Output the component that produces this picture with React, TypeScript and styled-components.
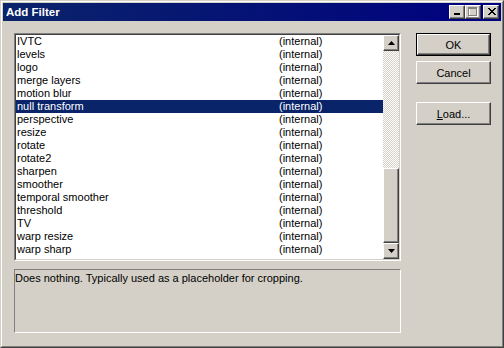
import React, { useState } from 'react'
import styled, { createGlobalStyle, css } from 'styled-components'

const FILTERS = [
  'IVTC',
  'levels',
  'logo',
  'merge layers',
  'motion blur',
  'null transform',
  'perspective',
  'resize',
  'rotate',
  'rotate2',
  'sharpen',
  'smoother',
  'temporal smoother',
  'threshold',
  'TV',
  'warp resize',
  'warp sharp',
]

const GlobalStyle = createGlobalStyle`
  html, body {
    margin: 0;
    padding: 0;
    background: #d4d0c8;
  }
  body {
    font-family: "Liberation Sans", Arial, sans-serif;
    font-size: 11px;
  }
`

const raised = css`
  background: #d4d0c8;
  border-style: solid;
  border-width: 1px;
  border-color: #fff #404040 #404040 #fff;
  box-shadow: inset -1px -1px 0 #808080, inset 1px 1px 0 #d4d0c8;
  box-sizing: border-box;
`

const Frame = styled.div`
  width: 504px;
  height: 348px;
  box-sizing: border-box;
  border: 1px solid;
  border-color: #d4d0c8 #404040 #404040 #d4d0c8;
  background: #d4d0c8;
  display: flex;
`

const Inner = styled.div`
  flex: 1;
  border: 1px solid;
  border-color: #fff #808080 #808080 #fff;
  padding: 1px;
  display: flex;
  flex-direction: column;
`

const TitleBar = styled.div`
  height: 18px;
  background: linear-gradient(to right, #0a246a, #000080);
  display: flex;
  align-items: center;
  padding: 0 2px 0 3px;
`

const Title = styled.div`
  flex: 1;
  color: #fff;
  font-weight: bold;
  font-size: 11.5px;
  font-family: "Liberation Sans", Arial, sans-serif;
`

const CaptionButton = styled.div<{ $gap?: boolean }>`
  ${raised};
  width: 16px;
  height: 14px;
  margin-left: ${(p) => (p.$gap ? '2px' : '0')};
  display: flex;
  align-items: center;
  justify-content: center;
`

const Body = styled.div`
  flex: 1;
  display: flex;
  padding: 12px 10px 12px 11px;
  gap: 15px;
`

const LeftCol = styled.div`
  width: 387px;
  display: flex;
  flex-direction: column;
  gap: 8px;
`

const ListBox = styled.div`
  height: 228px;
  box-sizing: border-box;
  border: 1px solid;
  border-color: #808080 #fff #fff #808080;
  display: flex;
`

const ListInner = styled.div`
  flex: 1;
  border: 1px solid;
  border-color: #404040 #d4d0c8 #d4d0c8 #404040;
  background: #fff;
  display: flex;
  overflow: hidden;
`

const Rows = styled.div`
  flex: 1;
`

const Row = styled.div<{ $selected?: boolean }>`
  height: 13px;
  line-height: 13px;
  display: grid;
  grid-template-columns: 262px 1fr;
  padding-left: 1px;
  white-space: nowrap;
  color: ${(p) => (p.$selected ? '#fff' : '#000')};
  background: ${(p) => (p.$selected ? '#0a246a' : 'transparent')};
`

const ScrollBar = styled.div`
  width: 16px;
  display: flex;
  flex-direction: column;
`

const ScrollButton = styled.div`
  ${raised};
  width: 16px;
  height: 16px;
  display: flex;
  align-items: center;
  justify-content: center;
`

const Track = styled.div`
  flex: 1;
  background-color: #fff;
  background-image: repeating-conic-gradient(#d4d0c8 0 25%, #fff 0 50%);
  background-size: 2px 2px;
  display: flex;
  flex-direction: column;
  justify-content: flex-end;
`

const Thumb = styled.div`
  ${raised};
  height: 75px;
`

const Description = styled.div`
  height: 64px;
  box-sizing: border-box;
  border: 1px solid;
  border-color: #808080 #fff #fff #808080;
  padding: 2px 0 0 0;
  line-height: 13px;
`

const RightCol = styled.div`
  display: flex;
  flex-direction: column;
`

const Button = styled.button<{ $default?: boolean; $spaced?: boolean }>`
  ${raised};
  width: 75px;
  height: 23px;
  margin-top: ${(p) => (p.$spaced ? '13px' : '0')};
  margin-bottom: 5px;
  padding: 0;
  font-family: "Liberation Sans", Arial, sans-serif;
  font-size: 11px;
  color: #000;
  ${(p) =>
    p.$default &&
    css`
      border-color: #fff #404040 #404040 #fff;
      box-shadow: 0 0 0 1px #000, inset -1px -1px 0 #808080;
      width: 73px;
      height: 21px;
      margin: 1px 1px 6px;
    `}
`

function CaptionButtons() {
  return (
    <>
      <CaptionButton>
        <svg width="8" height="8" viewBox="0 0 8 8">
          <rect x="1" y="5" width="6" height="2" fill="#000" />
        </svg>
      </CaptionButton>
      <CaptionButton>
        <svg width="10" height="10" viewBox="0 0 10 10">
          <rect x="1.5" y="1.5" width="8" height="8" fill="none" stroke="#fff" />
          <rect x="0.5" y="0.5" width="8" height="8" fill="none" stroke="#808080" />
          <rect x="0" y="1" width="9" height="1" fill="#808080" />
        </svg>
      </CaptionButton>
      <CaptionButton $gap>
        <svg width="9" height="8" viewBox="0 0 9 8">
          <path d="M1 0 L8 7 M2 0 L9 7 M8 0 L1 7 M9 0 L2 7" stroke="#000" strokeWidth="1" />
        </svg>
      </CaptionButton>
    </>
  )
}

function Arrow({ down }: { down?: boolean }) {
  return (
    <svg width="7" height="4" viewBox="0 0 7 4">
      <path d={down ? 'M0 0 H7 L3.5 4 Z' : 'M0 4 H7 L3.5 0 Z'} fill="#000" />
    </svg>
  )
}

export default function App() {
  const [selected, setSelected] = useState(5)
  return (
    <>
      <GlobalStyle />
      <Frame>
        <Inner>
          <TitleBar>
            <Title>Add Filter</Title>
            <CaptionButtons />
          </TitleBar>
          <Body>
            <LeftCol>
              <ListBox>
                <ListInner>
                  <Rows>
                    {FILTERS.map((f, i) => (
                      <Row key={f} $selected={i === selected} onClick={() => setSelected(i)}>
                        <span>{f}</span>
                        <span>(internal)</span>
                      </Row>
                    ))}
                  </Rows>
                  <ScrollBar>
                    <ScrollButton>
                      <Arrow />
                    </ScrollButton>
                    <Track>
                      <Thumb />
                    </Track>
                    <ScrollButton>
                      <Arrow down />
                    </ScrollButton>
                  </ScrollBar>
                </ListInner>
              </ListBox>
              <Description>Does nothing. Typically used as a placeholder for cropping.</Description>
            </LeftCol>
            <RightCol>
              <Button $default>OK</Button>
              <Button>Cancel</Button>
              <Button $spaced>
                <u>L</u>oad...
              </Button>
            </RightCol>
          </Body>
        </Inner>
      </Frame>
    </>
  )
}
